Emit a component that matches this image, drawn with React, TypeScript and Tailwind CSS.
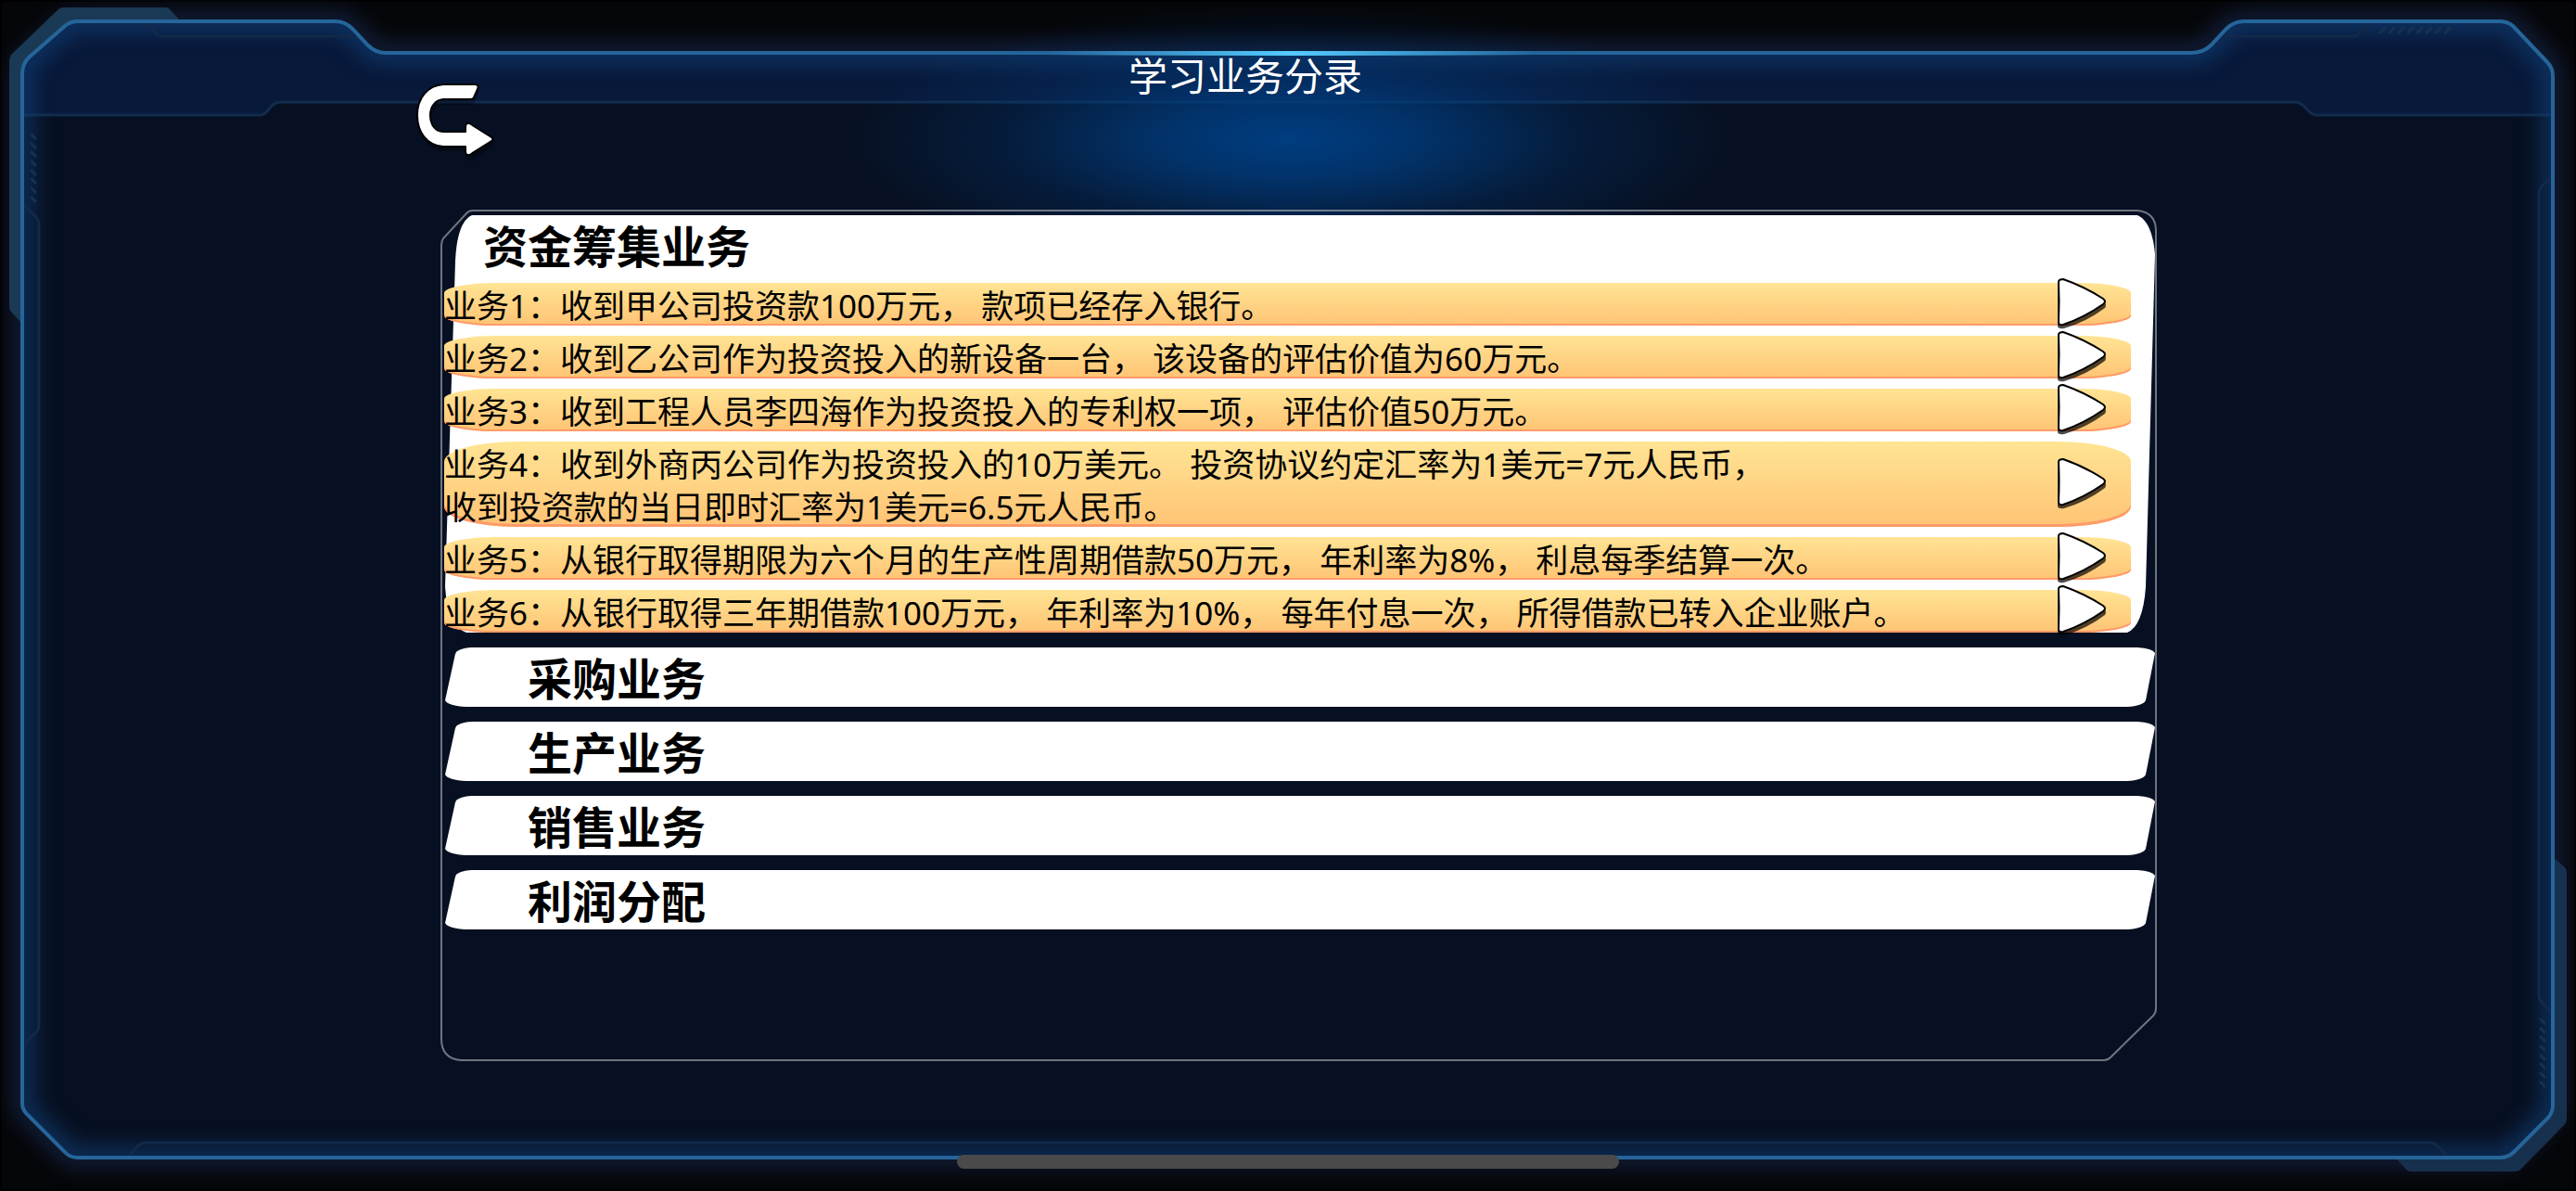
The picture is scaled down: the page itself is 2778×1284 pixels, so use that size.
import { useState } from 'react'

type Category = {
  title: string
  entries: string[][]
}

const categories: Category[] = [
  {
    title: '资金筹集业务',
    entries: [
      ['业务1：收到甲公司投资款100万元， 款项已经存入银行。'],
      ['业务2：收到乙公司作为投资投入的新设备一台， 该设备的评估价值为60万元。'],
      ['业务3：收到工程人员李四海作为投资投入的专利权一项， 评估价值50万元。'],
      [
        '业务4：收到外商丙公司作为投资投入的10万美元。 投资协议约定汇率为1美元=7元人民币，',
        '收到投资款的当日即时汇率为1美元=6.5元人民币。',
      ],
      ['业务5：从银行取得期限为六个月的生产性周期借款50万元， 年利率为8%， 利息每季结算一次。'],
      ['业务6：从银行取得三年期借款100万元， 年利率为10%， 每年付息一次， 所得借款已转入企业账户。'],
    ],
  },
  { title: '采购业务', entries: [] },
  { title: '生产业务', entries: [] },
  { title: '销售业务', entries: [] },
  { title: '利润分配', entries: [] },
]

const FRAME =
  'M24 80Q24 69 31 62L70 28Q76 23 84 23H362Q372 23 380 31L397 49Q405 57 416 57H2362Q2376 57 2384 49L2401 31Q2409 23 2420 23H2695Q2704 23 2710 28L2747 67Q2753 73 2753 82V1192Q2753 1199 2748 1205L2711 1242Q2705 1248 2696 1248H84Q75 1248 70 1242L31 1203Q24 1197 24 1190Z'

const ticks = [0, 1, 2, 3, 4, 5, 6, 7]

function Backdrop() {
  return (
    <svg
      className="absolute inset-0 h-full w-full"
      viewBox="0 0 2778 1284"
      preserveAspectRatio="none"
      fill="none"
      aria-hidden="true"
    >
      <defs>
        <radialGradient id="halo">
          <stop offset="0" stopColor="#003d80" />
          <stop offset="0.3" stopColor="#003d80" stopOpacity="0.75" />
          <stop offset="0.65" stopColor="#003d80" stopOpacity="0.26" />
          <stop offset="1" stopColor="#003d80" stopOpacity="0" />
        </radialGradient>
        <linearGradient id="flare">
          <stop offset="0" stopColor="#55ccff" stopOpacity="0" />
          <stop offset="0.5" stopColor="#55ccff" />
          <stop offset="1" stopColor="#55ccff" stopOpacity="0" />
        </linearGradient>
        <filter id="glow" x="-5%" y="-5%" width="110%" height="110%" colorInterpolationFilters="sRGB">
          <feGaussianBlur stdDeviation="11" />
        </filter>
        <clipPath id="inside">
          <path d={FRAME} />
        </clipPath>
      </defs>

      <rect x="1" y="1" width="2776" height="1282" rx="4" fill="#050609" stroke="#000" strokeWidth="2" />
      <path d={FRAME} stroke="#1a2c55" strokeOpacity="0.7" strokeWidth="20" filter="url(#glow)" />
      <path d={FRAME} fill="#071022" />

      {/* Header band */}
      <g clipPath="url(#inside)">
        <path
          d="M20 124H280Q285 124 289 119L294 113Q298 110 304 110H2475Q2480 110 2484 114L2491 121Q2494 124 2499 124H2760V0H20Z"
          fill="#08193a"
          stroke="#122c4d"
          strokeWidth="3"
        />
        <path d={FRAME} stroke="#104078" strokeOpacity="0.7" strokeWidth="22" filter="url(#glow)" />
      </g>

      {/* Corner plates */}
      <path d="M24 349L12 336Q10 334 10 330V66Q10 62 12 59L63 10Q65 8 69 8H178Q182 8 184 11L193 21H84Q76 23 70 28L31 62Q24 69 24 80Z" fill="#1a3954" />
      <path d="M2754 925L2766 935Q2768 937 2768 940V1206Q2768 1209 2766 1212L2718 1261Q2716 1263 2712 1263H2600Q2597 1263 2595 1261L2585 1250H2696Q2705 1248 2711 1242L2748 1205Q2753 1199 2753 1192Z" fill="#17304d" />

      {/* Inner trim */}
      <g stroke="#12294a" strokeWidth="3">
        <path d="M156 24L169 37Q171 39 176 39H386" />
        <path d="M2394 39H2538Q2541 39 2543 37L2557 24" />
        <path d="M26 222L38 233Q42 237 42 243V1106Q42 1110 39 1113L27 1124" />
        <path d="M2752 190L2741 201Q2738 204 2738 210V1073Q2738 1078 2742 1082L2752 1091" />
        <path d="M138 1247L150 1234Q153 1232 158 1232H2620Q2625 1232 2628 1235L2640 1247" />
      </g>
      <g stroke="#16324f" strokeWidth="3" strokeLinecap="round">
        {ticks.map((i) => (
          <path key={i} d={`M${2567 + i * 10} 35l5 -5`} />
        ))}
        {ticks.map((i) => (
          <path key={i} d={`M34 ${145 + i * 10 - Math.round(i / 3)}l4 4`} />
        ))}
        {ticks.map((i) => (
          <path key={i} d={`M2740 ${1099 + i * 10 - Math.round(i / 3)}l4 4`} />
        ))}
      </g>

      <ellipse cx="1392" cy="150" rx="480" ry="145" fill="url(#halo)" />
      <path d={FRAME} stroke="#25659a" strokeWidth="4" />
      <rect x="1130" y="55" width="524" height="5" fill="url(#flare)" />
    </svg>
  )
}

function PanelOutline() {
  return (
    <svg
      className="absolute inset-0 h-full w-full"
      viewBox="0 0 1851 917"
      preserveAspectRatio="none"
      fill="none"
      aria-hidden="true"
    >
      <path
        d="M1 38Q1 34 3 31L29 3Q31 1 35 1H1830Q1850 3 1850 23V860Q1850 865 1847 868L1801 913Q1798 916 1794 916H22Q1 914 1 893Z"
        stroke="#c4c8ce"
        strokeOpacity="0.55"
        strokeWidth="2"
      />
    </svg>
  )
}

function Plate() {
  return (
    <svg
      className="absolute inset-0 h-full w-full"
      viewBox="0 0 1845 64"
      preserveAspectRatio="none"
      aria-hidden="true"
    >
      <path
        d="M30 0H1826Q1842 1 1845 6L1835 57Q1832 63 1815 64H24Q4 63 1 57L12 7Q14 1 30 0Z"
        fill="#fff"
      />
    </svg>
  )
}

function PlayIcon() {
  return (
    <svg width="54" height="56" viewBox="0 0 54 56" aria-hidden="true">
      <path
        d="M1 6Q1 3 6 3Q30 12 52 26Q54 29 52 32Q32 47 8 54Q2 55 1 52Z"
        fill="#000"
        fillOpacity="0.7"
      />
      <path
        d="M2 4Q2 1 7 1Q30 9 50 22Q54 25 50 28Q30 42 7 50Q2 51 2 47Q3 25 2 4Z"
        fill="#fff"
        stroke="#000"
        strokeWidth="2"
        strokeLinejoin="round"
      />
    </svg>
  )
}

function BackIcon() {
  return (
    <svg width="87" height="88" viewBox="0 0 87 88" aria-hidden="true">
      <path
        d="M31 3H65Q70 3 68 8L64 17Q63 20 60 20H31C22 21 17 28 17 37C17 46 22 54 31 54H55V48Q56 43 61 46L83 60Q86 62 83 65L61 80Q56 82 55 77V70H31C13 69 3 54 3 36C3 18 14 4 31 3Z"
        fill="#000"
        fillOpacity="0.3"
        transform="translate(1 5)"
      />
      <path
        d="M31 3H65Q70 3 68 8L64 17Q63 19 60 19H31C22 20 17 27 17 36C17 46 22 54 31 54H55V48Q56 43 61 46L83 60Q86 62 83 64L61 78Q56 81 55 76V70H31C13 69 3 54 3 36C3 18 14 4 31 3Z"
        fill="#fff"
        stroke="#000"
        strokeWidth="2"
        strokeLinejoin="round"
      />
    </svg>
  )
}

function Entry({ lines }: { lines: string[] }) {
  const tall = lines.length > 1
  return (
    <li
      className={`flex items-center justify-between bg-linear-to-b from-[#ffe494] to-[#ffc374] pr-[26px] ${
        tall
          ? 'rounded-[78px/22px] shadow-[inset_0_-3px_0_#ff9a68]'
          : 'rounded-[56px/11px] shadow-[inset_0_-2px_0_#ff9a68]'
      }`}
    >
      <p className="-mb-0.5 pt-0.5 text-[35px] leading-[46px] whitespace-nowrap text-black">
        {lines.map((line) => (
          <span key={line} className="block">
            {line}
          </span>
        ))}
      </p>
      <button type="button" className="-my-2 shrink-0 cursor-pointer" aria-label={lines[0].split('：')[0]}>
        <PlayIcon />
      </button>
    </li>
  )
}

export default function App() {
  const [open, setOpen] = useState(0)

  return (
    <div className="relative flex min-h-screen flex-col overflow-hidden bg-black font-['Noto_Sans','Noto_Sans_CJK_SC',sans-serif]">
      <Backdrop />

      {/* Header */}
      <header className="relative mr-[452px] ml-[447px] flex h-[226px] items-start">
        <a href="#" className="mt-[88px] block" aria-label="返回">
          <BackIcon />
        </a>
        <h1 className="mt-14 flex-1 pr-[174px] text-center text-[42px] leading-[52px] text-white">
          学习业务分录
        </h1>
      </header>

      {/* Category list */}
      <main className="relative mr-[452px] mb-[140px] ml-[475px] flex-1">
        <PanelOutline />
        <div className="relative flex flex-col gap-4 pt-1.5 pr-0.5 pl-1">
          {categories.map((category, index) => {
            const expanded = open === index && category.entries.length > 0
            return (
              <section key={category.title} className="relative">
                <Plate />
                <h2 className="relative">
                  <button
                    type="button"
                    aria-expanded={expanded}
                    onClick={() => setOpen(index)}
                    className={`block w-full cursor-pointer pt-1 text-left text-5xl leading-[60px] font-bold text-black ${
                      expanded ? 'pb-[9px] pl-[42px]' : 'pl-[90px]'
                    }`}
                  >
                    {category.title}
                  </button>
                </h2>
                {expanded && (
                  <ul className="relative mr-[26px] flex flex-col gap-[11px]">
                    {category.entries.map((lines) => (
                      <Entry key={lines[0]} lines={lines} />
                    ))}
                  </ul>
                )}
              </section>
            )
          })}
        </div>
      </main>

      <div className="absolute bottom-6 left-1/2 h-[15px] w-[714px] -translate-x-1/2 rounded-lg bg-[#4a4a4a]" />
    </div>
  )
}
